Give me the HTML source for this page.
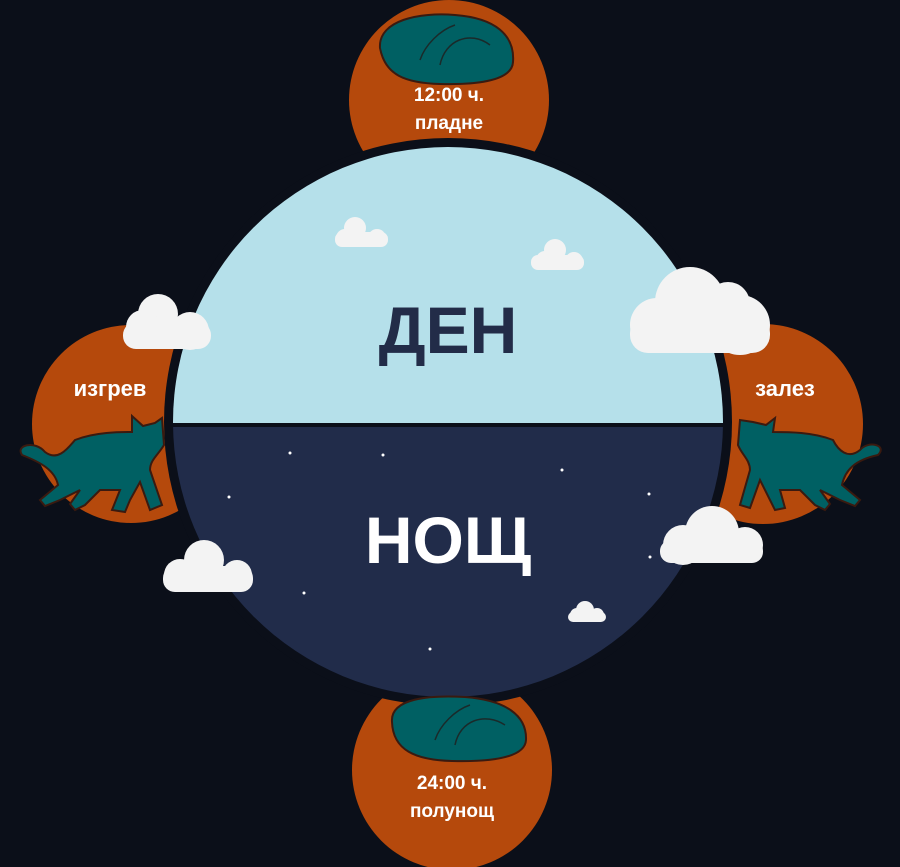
<!DOCTYPE html>
<html><head><meta charset="utf-8"><style>
html,body{margin:0;padding:0;background:#0b0f19;}
body{width:900px;height:867px;position:relative;overflow:hidden;font-family:"Liberation Sans","DejaVu Sans",sans-serif;}
.t{position:absolute;color:#fff;font-weight:bold;text-align:center;font-family:"Liberation Sans","DejaVu Sans",sans-serif;}
</style></head><body>
<svg width="900" height="867" style="position:absolute;left:0;top:0">
<defs>
<clipPath id="top"><rect x="0" y="0" width="900" height="425"/></clipPath>
<clipPath id="bot"><rect x="0" y="425" width="900" height="442"/></clipPath>
</defs>
<circle cx="449" cy="100" r="100" fill="#b5490c"/>
<circle cx="131" cy="424" r="99" fill="#b5490c"/>
<circle cx="763" cy="424" r="100" fill="#b5490c"/>
<circle cx="452" cy="770" r="100" fill="#b5490c"/>
<circle cx="448" cy="422" r="284" fill="#0b0f19"/>
<circle cx="448" cy="422" r="275" fill="#b5e0ea" clip-path="url(#top)"/>
<circle cx="448" cy="422" r="275" fill="#212c4a" clip-path="url(#bot)"/>
<rect x="170" y="423" width="556" height="4" fill="#0b0f19"/>
<g fill="#fff">
<circle cx="290" cy="453" r="1.5"/><circle cx="383" cy="455" r="1.5"/><circle cx="562" cy="470" r="1.5"/>
<circle cx="229" cy="497" r="1.5"/><circle cx="649" cy="494" r="1.5"/><circle cx="650" cy="557" r="1.5"/>
<circle cx="304" cy="593" r="1.5"/><circle cx="430" cy="649" r="1.5"/>
</g>
<g fill="#f3f3f3">
<g><circle cx="355" cy="228" r="11"/><circle cx="345" cy="238" r="9"/><circle cx="377" cy="238" r="9"/><rect x="335" y="232" width="53" height="15" rx="7"/></g>
<g><circle cx="555" cy="250" r="11"/><circle cx="545" cy="260" r="9"/><circle cx="574" cy="261" r="9"/><rect x="531" y="255" width="53" height="15" rx="7"/></g>
<g><circle cx="690" cy="302" r="35"/><circle cx="657" cy="325" r="27"/><circle cx="740" cy="325" r="30"/><circle cx="728" cy="304" r="22"/><rect x="630" y="315" width="140" height="38" rx="18"/></g>
<g><circle cx="158" cy="314" r="20"/><circle cx="143" cy="327" r="17"/><circle cx="190" cy="331" r="19"/><rect x="123" y="322" width="88" height="27" rx="13"/></g>
<g><circle cx="204" cy="560" r="20"/><circle cx="180" cy="575" r="16"/><circle cx="237" cy="575" r="15"/><rect x="163" y="566" width="90" height="26" rx="12"/></g>
<g><circle cx="712" cy="533" r="27"/><circle cx="683" cy="545" r="20"/><circle cx="745" cy="545" r="18"/><rect x="660" y="540" width="103" height="23" rx="11"/></g>
<g><circle cx="585" cy="610" r="9"/><circle cx="577" cy="615" r="7"/><circle cx="597" cy="615" r="7"/><rect x="568" y="612" width="38" height="10" rx="5"/></g>
</g>
<g fill="#006063" stroke="#3a1a10" stroke-width="2">
<path d="M380 48 C378 20 420 12 455 15 C495 18 515 35 513 62 C512 80 480 85 440 84 C405 83 385 75 380 48Z"/>
<path d="M392 722 C390 698 430 695 465 697 C505 700 527 715 526 740 C525 758 490 762 452 761 C415 760 393 750 392 722Z"/>
</g>
<g fill="none" stroke="#1a2a2a" stroke-width="1.5">
<path d="M440 65 C445 40 470 30 490 45 M420 60 C425 45 440 30 455 25"/>
<path d="M455 745 C460 720 485 712 505 725 M435 740 C440 725 455 710 470 705"/>
</g>
<g fill="#006063" stroke="#3a1a10" stroke-width="2">
<path d="M22 455 C15 445 35 440 45 452 C58 462 68 448 75 440 C95 432 120 432 132 432 L132 416 L143 426 L155 423 L162 418 L164 445 C158 455 150 460 150 470 L162 505 L150 510 L140 482 L130 500 L125 512 L112 510 L120 490 L100 490 L85 505 L75 510 L70 504 L80 490 L60 500 L45 506 L40 500 L58 485 C55 470 40 462 22 455Z"/>
<path d="M878 455 C888 445 868 440 860 450 C848 460 838 450 833 440 C813 432 788 432 773 432 L775 418 L766 425 L753 422 L740 420 L738 445 C742 455 750 460 750 470 L740 505 L750 508 L760 480 L770 500 L775 510 L785 508 L780 490 L800 490 L815 505 L825 510 L830 504 L820 490 L840 500 L855 506 L860 500 L842 485 C845 470 855 460 878 455Z"/>
</g>
</svg>
<div class="t" style="left:349px;top:82px;width:200px;font-size:19px;line-height:28px">12:00 ч.<br>пладне</div>
<div class="t" style="left:20px;top:376px;width:180px;font-size:22px">изгрев</div>
<div class="t" style="left:700px;top:376px;width:170px;font-size:22px">залез</div>
<div class="t" style="left:352px;top:770px;width:200px;font-size:19px;line-height:28px">24:00 ч.<br>полунощ</div>
<div class="t" style="left:298px;top:292px;width:300px;font-size:66px;color:#222c48">ДЕН</div>
<div class="t" style="left:298px;top:502px;width:300px;font-size:66px">НОЩ</div>
</body></html>
